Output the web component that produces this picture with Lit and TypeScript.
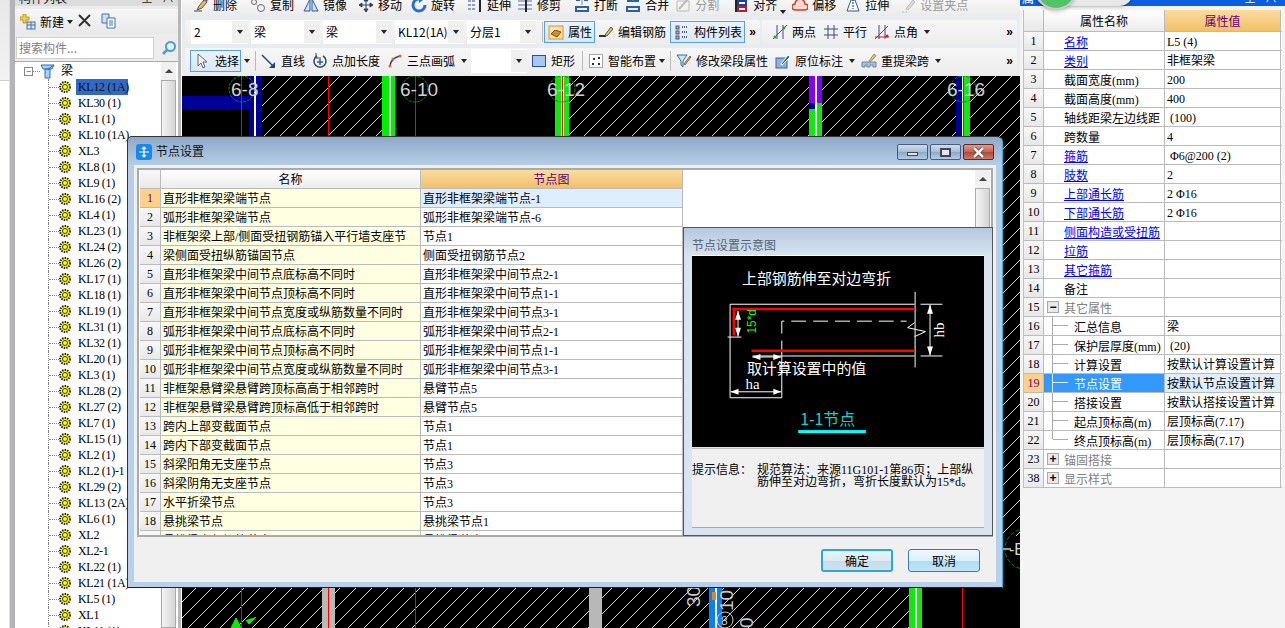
import { LitElement, html, css, svg, nothing } from "lit";
import { customElement } from "lit/decorators.js";

const icons: Record<string, unknown> = {
  erase: svg`<path d="M1 14h8" stroke="#444"/><path d="M4 13l2-4 5-6 3 2-5 6z" fill="#e8c050" stroke="#555"/><path d="M11 3l2-2 2 2-1 2z" fill="#a050c0"/>`,
  copy: svg`<circle cx="4" cy="5" r="2.5" fill="none" stroke="#667"/><circle cx="11" cy="11" r="3.5" fill="none" stroke="#667"/><path d="M6 7l2 2" stroke="#99a" stroke-dasharray="1 1"/>`,
  mirror: svg`<path d="M7 2v12H1zM9 2v12h6z" fill="#cfe0f5" stroke="#2a5a9a"/>`,
  move: svg`<path d="M8 1v14M1 8h14M8 1l-2 3h4zM8 15l-2-3h4zM1 8l3-2v4zM15 8l-3-2v4z" fill="#345" stroke="#345"/>`,
  rotate: svg`<path d="M8 2a6 6 0 1 0 6 6" fill="none" stroke="#2a70c8" stroke-width="3"/><path d="M8 0l4 3-4 3z" fill="#2a70c8"/>`,
  extend: svg`<path d="M1 4h8M1 8h8M1 12h8" stroke="#2a4a9a" stroke-dasharray="3 1"/><path d="M13 1v14" stroke="#223" stroke-width="2"/>`,
  trim: svg`<path d="M1 4h14M1 8h14M1 12h14" stroke="#5070a8"/><path d="M9 1v14" stroke="#223" stroke-width="2"/>`,
  break: svg`<path d="M2 10h12v4H2zM2 3h4M10 3h4" fill="none" stroke="#2a60a8" stroke-width="2"/><path d="M8 1v7" stroke="#888"/>`,
  merge: svg`<path d="M2 10h12v4H2zM2 4h12" fill="none" stroke="#2a60a8" stroke-width="2"/><path d="M8 1v3" stroke="#888"/>`,
  split: svg`<path d="M2 4h12v10H2z" fill="none" stroke="#bbb"/><path d="M4 12L13 2" stroke="#bbb" stroke-width="2"/>`,
  align: svg`<path d="M3 1v14" stroke="#223" stroke-width="2"/><path d="M5 4h8v4H5z" fill="#fff" stroke="#2040a0" stroke-width="2"/><path d="M5 10h8v4H5z" fill="#fff" stroke="#b02030" stroke-width="2"/>`,
  offset: svg`<path d="M3 13a3 3 0 0 1 0-6 5 5 0 0 1 10 0 3 3 0 0 1 0 6z" fill="#fbd8d0" stroke="#c84030" stroke-width="1.5"/>`,
  stretch: svg`<path d="M2 14h12L10 3H6z" fill="#fff" stroke="#2a5a9a"/><path d="M8 2v10" stroke="#223" stroke-dasharray="2 1"/>`,
  grip: svg`<path d="M2 15h6" stroke="#bbb" stroke-dasharray="2 1"/><path d="M6 12l7-9 2 2-7 8z" fill="#ddd" stroke="#bbb"/>`,
  prop: svg`<rect x="1" y="2" width="14" height="13" fill="#ffe0a0" stroke="#e09030"/><path d="M3 10l4-4 6 2-4 5z" fill="#c89030" stroke="#805010"/><path d="M3 5h6" stroke="#fff"/>`,
  rebar: svg`<path d="M1 12h7" stroke="#333" stroke-width="2"/><path d="M7 11l6-8 2 2-6 7z" fill="#e8c050" stroke="#555"/>`,
  list: svg`<rect x="2" y="2" width="3" height="3" fill="#aac" stroke="#557"/><rect x="2" y="7" width="3" height="3" fill="#aac" stroke="#557"/><rect x="2" y="12" width="3" height="3" fill="#aac" stroke="#557"/><path d="M8 3h6M8 8h6M8 13h6" stroke="#557" stroke-dasharray="1 1" stroke-width="2"/>`,
  twopt: svg`<path d="M5 1v14M11 1v14" stroke="#404890"/><path d="M1 15L15 1" stroke="#d02020"/><circle cx="3" cy="13" r="1.5" fill="#30a030"/><circle cx="12" cy="4" r="1.5" fill="#30a030"/>`,
  parallel: svg`<path d="M5 1v14M11 1v14M1 5h14M1 11h14" stroke="#404890"/>`,
  angle: svg`<path d="M5 1v14M11 1v14" stroke="#404890"/><path d="M1 15L14 2M1 13h14" stroke="#d02020"/><circle cx="13" cy="12" r="1.5" fill="#d02020"/>`,
  cursor: svg`<path d="M4 1v12l3-3 2 5 2-1-2-5h4z" fill="#f4f4f4" stroke="#667"/>`,
  line: svg`<path d="M1 2l12 12" stroke="#1c4a80" stroke-width="1.5"/><path d="M14 15H8l6-6z" fill="#1c4a80"/>`,
  ptlen: svg`<path d="M5 3a6 6 0 1 0 6 0" fill="none" stroke="#345" stroke-width="1.5"/><path d="M8 6v6M5 9h6" stroke="#2060b0" stroke-width="1.5"/><path d="M4 0v5h5" fill="none" stroke="#345"/>`,
  arc: svg`<path d="M3 13Q4 5 13 3" fill="none" stroke="#304060" stroke-width="1.5"/><circle cx="3" cy="13" r="1.5" fill="#e06040"/><circle cx="6" cy="6" r="1.5" fill="#e06040"/><circle cx="13" cy="3" r="1.5" fill="#e06040"/>`,
  rect: svg`<rect x="1.500" y="2.500" width="13" height="11" fill="#a8c8f0" stroke="#2a50a0"/>`,
  smart: svg`<rect x="1.500" y="1.500" width="13" height="13" fill="#fff" stroke="#555" stroke-dasharray="1 1"/><path d="M5 5h2v2H5zM10 4h2v2h-2zM4 10h2v2H4zM10 10h2v2h-2z" fill="#234"/>`,
  modify: svg`<path d="M1 2h10L7 8v6l-2-2V8z" fill="#cfe4f8" stroke="#2a70a8"/><path d="M8 11l6-8 1 1-6 8z" fill="#e8c050" stroke="#864"/>`,
  note: svg`<rect x="1" y="5" width="11" height="10" fill="#90b0e0" stroke="#36a"/><path d="M6 11l7-9 2 2-8 8z" fill="#2a60a8" stroke="#fff"/>`,
  respan: svg`<path d="M1 14V9h14v5h-3v-2H9v2H6v-2H4v2z" fill="#a8c0e0" stroke="#68a"/><path d="M8 8l5-7 2 2-6 6z" fill="#e8c070" stroke="#a86"/>`,
  newitem: svg`<path d="M3 0h3v3h3v3H6v3H3V6H0V3h3z" fill="#f0d040" stroke="#b09020" stroke-width=".8"/><rect x="7" y="8" width="8" height="7" fill="#dbe8f5" stroke="#4070a8"/><path d="M7 11h8M11 8v7" stroke="#4070a8"/>`,
  del: svg`<path d="M2 2l11 11M13 2L2 13" stroke="#333" stroke-width="2"/>`,
  clone: svg`<path d="M1 1h7v9H1z" fill="#cfe0f5" stroke="#4070b0"/><path d="M6 5h8v10H6z" fill="#fff" stroke="#4070b0"/><path d="M8 8h4M8 10h4M8 12h4" stroke="#4070b0"/>`,
  search: svg`<circle cx="9.500" cy="6.500" r="4.500" fill="#e8f4ff" stroke="#4a9ae0" stroke-width="2"/><path d="M6 10l-4 4" stroke="#4a9ae0" stroke-width="2.500"/>`,
};

const icon = (name: string) => html`<svg class="ico" viewBox="0 0 16 16">${icons[name]}</svg>`;

const gear = html`<svg class="gear" viewBox="0 0 12 12"><circle cx="6" cy="6" r="5" fill="#ff0" stroke="#223" stroke-width="2" stroke-dasharray="1.500 1"/><circle cx="6" cy="6" r="2.500" fill="#ff0" stroke="#333"/></svg>`;

type Tool = { i: string; t: string; ml: number; off?: boolean; caret?: number };

const row1: Tool[] = [
  { i: "erase", t: "删除", ml: 0 },
  { i: "copy", t: "复制", ml: 13 },
  { i: "mirror", t: "镜像", ml: 9 },
  { i: "move", t: "移动", ml: 11 },
  { i: "rotate", t: "旋转", ml: 9 },
  { i: "extend", t: "延伸", ml: 12 },
  { i: "trim", t: "修剪", ml: 6 },
  { i: "break", t: "打断", ml: 13 },
  { i: "merge", t: "合并", ml: 7 },
  { i: "split", t: "分割", ml: 6, off: true },
  { i: "align", t: "对齐", ml: 14, caret: 3 },
  { i: "offset", t: "偏移", ml: 6 },
  { i: "stretch", t: "拉伸", ml: 9 },
  { i: "grip", t: "设置夹点", ml: 11, off: true },
];

const treeItems = ["KL12 (1A)", "KL30 (1)", "KL1 (1)", "KL10 (1A)", "XL3", "KL8 (1)", "KL9 (1)", "KL16 (2)", "KL4 (1)", "KL23 (1)", "KL24 (2)", "KL26 (2)", "KL17 (1)", "KL18 (1)", "KL19 (1)", "KL31 (1)", "KL32 (1)", "KL20 (1)", "KL3 (1)", "KL28 (2)", "KL27 (2)", "KL7 (1)", "KL15 (1)", "KL2 (1)", "KL2 (1)-1", "KL29 (2)", "KL13 (2A)", "KL6 (1)", "XL2", "XL2-1", "KL22 (1)", "KL21 (1A)", "KL5 (1)", "XL1", "KL11 (1)"];

const nodeRows = [
  ["直形非框架梁端节点", "直形非框架梁端节点-1"],
  ["弧形非框架梁端节点", "弧形非框架梁端节点-6"],
  ["非框架梁上部/侧面受扭钢筋锚入平行墙支座节", "节点1"],
  ["梁侧面受扭纵筋锚固节点", "侧面受扭钢筋节点2"],
  ["直形非框架梁中间节点底标高不同时", "直形非框架梁中间节点2-1"],
  ["直形非框架梁中间节点顶标高不同时", "直形非框架梁中间节点1-1"],
  ["直形非框架梁中间节点宽度或纵筋数量不同时", "直形非框架梁中间节点3-1"],
  ["弧形非框架梁中间节点底标高不同时", "弧形非框架梁中间节点2-1"],
  ["弧形非框架梁中间节点顶标高不同时", "弧形非框架梁中间节点1-1"],
  ["弧形非框架梁中间节点宽度或纵筋数量不同时", "弧形非框架梁中间节点3-1"],
  ["非框架悬臂梁悬臂跨顶标高高于相邻跨时", "悬臂节点5"],
  ["非框架悬臂梁悬臂跨顶标高低于相邻跨时", "悬臂节点5"],
  ["跨内上部变截面节点", "节点1"],
  ["跨内下部变截面节点", "节点1"],
  ["斜梁阳角无支座节点", "节点3"],
  ["斜梁阴角无支座节点", "节点3"],
  ["水平折梁节点", "节点3"],
  ["悬挑梁节点", "悬挑梁节点1"],
  ["悬挑梁上部钢筋节点", "悬挑梁节点2"],
];

// kind: l = blue link, n = plain, g = grey group, c = child of the group
type Prop = { no: number; name: string; val?: string; kind: string; box?: string; last?: boolean };
const props: Prop[] = [
  { no: 1, name: "名称", val: "L5 (4)", kind: "l" },
  { no: 2, name: "类别", val: "非框架梁", kind: "l" },
  { no: 3, name: "截面宽度(mm)", val: "200", kind: "n" },
  { no: 4, name: "截面高度(mm)", val: "400", kind: "n" },
  { no: 5, name: "轴线距梁左边线距", val: " (100)", kind: "n" },
  { no: 6, name: "跨数量", val: "4", kind: "n" },
  { no: 7, name: "箍筋", val: " Φ6@200 (2)", kind: "l" },
  { no: 8, name: "肢数", val: "2", kind: "l" },
  { no: 9, name: "上部通长筋", val: "2 Φ16", kind: "l" },
  { no: 10, name: "下部通长筋", val: "2 Φ16", kind: "l" },
  { no: 11, name: "侧面构造或受扭筋", kind: "l" },
  { no: 12, name: "拉筋", kind: "l" },
  { no: 13, name: "其它箍筋", kind: "l" },
  { no: 14, name: "备注", kind: "n" },
  { no: 15, name: "其它属性", kind: "g", box: "−" },
  { no: 16, name: "汇总信息", val: "梁", kind: "c" },
  { no: 17, name: "保护层厚度(mm)", val: " (20)", kind: "c" },
  { no: 18, name: "计算设置", val: "按默认计算设置计算", kind: "c" },
  { no: 19, name: "节点设置", val: "按默认节点设置计算", kind: "c" },
  { no: 20, name: "搭接设置", val: "按默认搭接设置计算", kind: "c" },
  { no: 21, name: "起点顶标高(m)", val: "层顶标高(7.17)", kind: "c" },
  { no: 22, name: "终点顶标高(m)", val: "层顶标高(7.17)", kind: "c", last: true },
  { no: 23, name: "锚固搭接", kind: "g", box: "+" },
  { no: 38, name: "显示样式", kind: "g", box: "+" },
];

const axes = [
  { x: 242, label: "6-8", tx: 231 },
  { x: 415, label: "6-10", tx: 400 },
  { x: 562, label: "6-12", tx: 547 },
  { x: 963, label: "6-16", tx: 947 },
];

@customElement("app-root")
export class AppRoot extends LitElement {
  static styles = css`
    :host {
      display: block;
      position: relative;
      width: 1285px;
      height: 628px;
      overflow: hidden;
      background: #fff;
      font: 12px/14px "Liberation Serif", "Noto Sans CJK SC", serif;
      color: #000;
    }
    .app { display: flex; height: 628px; }
    .ico { width: 16px; height: 16px; flex: none; }
    .gear { width: 12px; height: 12px; flex: none; }

    .rail { width: 9px; flex: none; background: #fff; border-right: 1px solid #ddd; }
    .rail-top { height: 80px; background: linear-gradient(#e8e8e8, #f2f2f2); border-bottom: 1px solid #ccc; }
    .rail-bar { width: 5px; flex: none; background: #b4b4b8; }

    .tree-panel { width: 163px; flex: none; display: flex; flex-direction: column; background: #ececec; }
    .panel-head { height: 6px; flex: none; display: flex; justify-content: space-between; overflow: hidden; padding: 0 4px; background: #dcdcdc; }
    .panel-head span { margin-top: -8px; line-height: 14px; color: #222; }
    .tree-tools { height: 25px; margin: 3px 0; flex: none; display: flex; align-items: center; padding-left: 5px; background: linear-gradient(#f6f6f6, #e9e9e9); font-family: "Noto Sans CJK SC", sans-serif; }
    .tree-tools .del { margin-left: 4px; }
    .tree-tools .clone { margin-left: 8px; }
    .tree-tools b { font-weight: 400; margin-left: 4px; }
    .search { height: 22px; flex: none; display: flex; align-items: center; gap: 7px; padding-left: 1px; }
    .search div { width: 134px; height: 20px; background: #fff; border: 1px solid #d0d0d0; padding-left: 2px; line-height: 20px; color: #808080; font-family: "Noto Sans CJK SC", sans-serif; }
    .tree { flex: 1; margin-top: 2px; display: flex; background: #fff; border-top: 1px solid #aaa; overflow: hidden; }
    .tree-list { width: 146px; flex: none; padding-top: 1px; overflow: hidden; }
    .tree-root { height: 16px; display: flex; align-items: center; padding-left: 9px; }
    .tbox { width: 9px; height: 9px; flex: none; border: 1px solid #888; box-sizing: border-box; background: #fff; line-height: 6px; text-align: center; font-size: 9px; }
    .tdots { width: 7px; border-top: 1px dotted #888; flex: none; }
    .tree-root .ico { margin-right: 5px; }
    .tree-row { height: 16px; margin-left: 33px; display: flex; align-items: center; border-left: 1px dotted #888; white-space: nowrap; }
    .tree-row .tdots { width: 10px; }
    .lbl { margin-left: 5px; padding: 1px 2px; letter-spacing: -0.3px; }
    .lbl.sel { background: #3169c6; color: #111; width: 48px; }

    .scroll { width: 15px; flex: none; display: flex; flex-direction: column; background: #f0f0f0; }
    .scroll-up { height: 18px; flex: none; display: flex; align-items: center; justify-content: center; }
    .scroll-up::before { content: ""; border: 4px solid transparent; border-top: 0; border-bottom: 4px solid #444; }
    .scroll-thumb { flex: 1; border: 1px solid #aaa; background: linear-gradient(90deg, #f4f4f4, #d4d4d4); }
    .split { width: 4px; flex: none; background: #fff; border-left: 3px solid #b8b8b8; box-sizing: border-box; }

    .center { width: 838px; flex: none; display: flex; flex-direction: column; background: #e9ecef; font-family: "Noto Sans CJK SC", sans-serif; }
    .bar { display: flex; align-items: center; background: linear-gradient(#f6f6f6, #ededed); white-space: nowrap; }
    .bar1 { height: 14px; margin-bottom: 6px; padding-left: 11px; overflow: hidden; align-items: flex-end; }
    .bar1 .tool { margin-bottom: 1px; }
    .bars2 { height: 24px; margin-bottom: 4px; display: flex; gap: 2px; margin-left: 3px; margin-right: 3px; }
    .group { display: flex; align-items: center; height: 24px; background: linear-gradient(#f6f6f6, #ededed); border-radius: 2px; }
    .group.a { width: 575px; padding-left: 6px; box-sizing: border-box; }
    .group.b { flex: 1; padding-left: 10px; }
    .bar3 { height: 26px; margin: 0 3px 2px; padding-left: 5px; }
    .tool { display: flex; align-items: center; gap: 4px; flex: none; }
    .tool.off { color: #9a9a9a; }
    .caret { width: 0; height: 0; flex: none; border: 3.500px solid transparent; border-top: 4px solid #222; border-bottom: 0; }
    .more { margin-left: auto; margin-right: 4px; font: 700 12px/14px "Liberation Sans", sans-serif; }
    .sep { width: 1px; height: 20px; flex: none; background: #bbb; }
    .combo { height: 24px; flex: none; box-sizing: border-box; display: flex; align-items: center; justify-content: space-between; background: #fff; padding-left: 3px; }
    .combo i { width: 16px; height: 22px; display: flex; align-items: center; justify-content: center; background: #f0f0f0; }
    .toggle { height: 22px; box-sizing: border-box; flex: none; display: flex; align-items: center; gap: 3px; padding-left: 3px; background: linear-gradient(#eaf3fc, #d8e8f8); border: 1px solid #5aa0e0; }

    .canvas { flex: 1; position: relative; background: #000; overflow: hidden; }
    .canvas svg { position: absolute; left: 0; top: 0; }

    .props { flex: 1; display: flex; flex-direction: column; background: #f4f4f4; }
    .props-head { height: 6px; flex: none; background: #0a5ee2; color: #fff; display: flex; justify-content: space-between; padding: 0 8px 0 2px; overflow: hidden; }
    .props-head span { margin-top: -8px; }
    .pill { position: absolute; left: 1035px; top: -8px; width: 98px; height: 14px; background: #e8e8e8; border-radius: 0 0 14px 14px; box-shadow: 0 1px 3px rgba(0, 0, 0, .25); }
    .ball { position: absolute; left: 1037px; top: -30px; width: 38px; height: 38px; border-radius: 50%; background: #52c468; box-shadow: 0 0 0 2px #ccc, 0 3px 4px rgba(0, 0, 0, .3); }
    .grid { margin: 4px 0 0 3px; width: 258px; border-left: 1px solid #c0c0c0; }
    .prow { display: grid; grid-template-columns: 20px 121px 116px; height: 19px; box-sizing: border-box; border-bottom: 1px solid #bbb; background: #fff; }
    .prow > div { border-right: 1px solid #bbb; line-height: 18px; white-space: pre; overflow: hidden; display: flex; align-items: center; box-sizing: border-box; }
    .idx { justify-content: center; background: linear-gradient(#f8f8f8, #e8e8e8); }
    .head { height: 22px; }
    .head > div { justify-content: center; }
    .h-name { background: linear-gradient(#fff, #ececec); padding-top: 2px; box-sizing: border-box; }
    .h-val { background: linear-gradient(#fbdca0, #f2c068); color: #60007a; padding-top: 2px; box-sizing: border-box; }
    .prow > .cell-val { padding: 1px 0 0 2px; }
    .prow > .cell-name { padding: 3px 0 0 20px; position: relative; }
    .link { color: #00f; text-decoration: underline; }
    .grey { color: #808080; }
    .pbox { position: absolute; left: 3px; top: 3px; width: 12px; height: 12px; box-sizing: border-box; border: 1px solid #aaa; background: #e8e8e8; text-align: center; color: #000; font: 700 12px/10px "Liberation Sans", sans-serif; }
    .branch { position: absolute; left: 8px; top: 0; bottom: 0; width: 15px; border-left: 1px solid #aaa; }
    .branch::after { content: ""; position: absolute; left: 0; top: 8px; width: 15px; border-top: 1px solid #aaa; }
    .branch.last { bottom: 10px; }
    .prow > .cell-name.child { padding-left: 30px; }
    .prow.on .idx { background: #ffd08a; color: #60007a; }
    .prow.on .cell-name { background: #3399ff; color: #fff; }
    .prow.on .branch, .prow.on .branch::after { border-color: #e0eeff; }
    .prow.on .cell-val { background: #dfeeff; }

    .dialog { position: absolute; left: 127px; top: 136px; width: 876px; height: 452px; box-sizing: border-box; border: 1px solid #333; border-right-color: #20b8e0; border-bottom-color: #222; border-radius: 5px 6px 0 0; padding: 0 6px 5px 6px; background: linear-gradient(#8fa9c8 0, #b5cde6 28px, #b8d0ea 100%); display: flex; flex-direction: column; font-family: "Liberation Serif", "Noto Sans CJK SC", serif; }
    .d-title { height: 28px; flex: none; display: flex; align-items: center; gap: 4px; padding-left: 2px; font-family: "Noto Sans CJK SC", sans-serif; color: #111; }
    .d-logo { width: 16px; height: 16px; margin-top: 2px; }
    .d-btns { margin-left: auto; display: flex; gap: 2px; margin-right: 2px; margin-top: 2px; }
    .d-btn { width: 31px; height: 16px; box-sizing: border-box; border: 1px solid #4a5a78; border-radius: 2px; background: linear-gradient(#cfdcec 0, #a4bdd8 50%, #8ca8c8 51%, #b4cce4); display: flex; align-items: center; justify-content: center; }
    .d-btn.x { background: linear-gradient(#e09a8c 0, #c8604e 50%, #b04838 51%, #cc7868); border-color: #602828; }
    .d-btn.x svg { width: 13px; height: 11px; }
    .d-min { width: 11px; height: 4px; background: #dfe6ee; border: 1px solid #445; box-sizing: border-box; margin-top: 4px; }
    .d-max { width: 11px; height: 9px; background: #dfe6ee; border: 2px solid #445; box-sizing: border-box; }
    .d-body { flex: 1; background: #f0f0f0; padding: 3px 3px 0 3px; display: flex; flex-direction: column; position: relative; }
    .d-frame { height: 369px; flex: none; box-sizing: border-box; border: 2px solid #aaa; background: #fff; position: relative; overflow: hidden; padding-left: 1px; }
    .nrow { display: grid; grid-template-columns: 21px 260px 262px; height: 19px; width: 543px; box-sizing: border-box; border-bottom: 1px solid #bbb; }
    .nrow > div { display: flex; align-items: center; border-right: 1px solid #bbb; white-space: nowrap; overflow: hidden; padding: 2px 0 0 2px; box-sizing: border-box; }
    .nrow > .idx { padding: 0; justify-content: center; }
    .nrow > .n-name { background: #ffffe1; }
    .nrow > .n-val { background: #fff; }
    .nrow.on > .idx { background: #ffd08a; color: #60007a; }
    .nrow.on > .n-val { background: #dfeeff; }
    .nrow.nhead > div { justify-content: center; padding: 2px 0 0; }
    .d-scroll { position: absolute; top: 0; right: 1px; bottom: 0; }
    .hint { position: absolute; left: 549px; top: 62px; width: 310px; height: 309px; box-sizing: border-box; border: 1px solid #555; background: linear-gradient(#b4c8de 0, #d8e4f0 28px, #d8e4f0 100%); padding: 0 8px; display: flex; flex-direction: column; }
    .hint-title { height: 27px; flex: none; display: flex; align-items: center; color: #556070; padding-top: 6px; box-sizing: border-box; font-family: "Noto Sans CJK SC", sans-serif; }
    .pic { width: 292px; height: 192px; flex: none; background: #000; display: block; border-top: 1px solid #fff; box-sizing: border-box; }
    .info { height: 80px; flex: none; margin-top: 1px; box-sizing: border-box; background: #f0f0f0; border-top: 1px solid #bbb; border-bottom: 1px solid #aaa; display: flex; padding-top: 15px; line-height: 12px; }
    .info-label { width: 65px; flex: none; }
    .d-foot { flex: 1; display: flex; justify-content: flex-end; align-items: center; gap: 15px; padding-right: 13px; padding-top: 2px; }
    .btn { width: 72px; height: 23px; box-sizing: border-box; display: flex; align-items: center; justify-content: center; border: 1px solid #3a7ab0; border-radius: 3px; background: linear-gradient(#eef7fd 0, #dcf0fb 50%, #b0dcf6 51%, #c0e4f8); font-family: "Noto Sans CJK SC", sans-serif; }
    .btn.def { border: 2px solid #2aa8d8; background: linear-gradient(#eaf4fa 0, #dceaf4 50%, #c4dcea 51%, #cfe2ec); }
  `;

  tool(t: Tool) {
    return html`<div class="tool ${t.off ? "off" : ""}" style="margin-left:${t.ml}px">${icon(t.i)}<span>${t.t}</span></div>${t.caret ? html`<span class="caret" style="margin-left:${t.caret}px"></span>` : nothing}`;
  }

  combo(text: string, w: number, ml = 3) {
    return html`<div class="combo" style="width:${w}px;margin-left:${ml}px"><span>${text}</span><i><span class="caret"></span></i></div>`;
  }

  renderTree() {
    return html`
      <div class="rail"><div class="rail-top"></div></div>
      <div class="rail-bar"></div>
      <div class="tree-panel">
        <div class="panel-head"><span>构件列表</span><span>⊥ &nbsp; ∧</span></div>
        <div class="tree-tools">
          ${icon("newitem")}<b>新建</b><span class="caret" style="margin-left:3px"></span>
          <span class="del">${icon("del")}</span><span class="clone">${icon("clone")}</span>
        </div>
        <div class="search"><div>搜索构件...</div>${icon("search")}</div>
        <div class="tree">
          <div class="tree-list">
            <div class="tree-root"><span class="tbox">−</span><span class="tdots"></span>
              <svg class="ico" viewBox="0 0 16 16"><path d="M1 2h13l-2 4H3zM5 6h5v9H5z" fill="#a8d0f0" stroke="#2a70b8"/><path d="M8 6l6-4" stroke="#2a70b8"/></svg>
              <span>梁</span></div>
            ${treeItems.map((t, i) => html`<div class="tree-row"><span class="tdots"></span>${gear}<span class="lbl ${i === 0 ? "sel" : ""}">${t}</span></div>`)}
          </div>
          <div class="scroll"><div class="scroll-up"></div><div class="scroll-thumb"></div></div>
        </div>
      </div>
      <div class="split"></div>
    `;
  }

  renderBars() {
    return html`
      <div class="bar bar1">${row1.map((t) => this.tool(t))}</div>
      <div class="bars2">
        <div class="group a">
          ${this.combo("2", 57, 0)}${this.combo("梁", 69)}${this.combo("梁", 69)}${this.combo("KL12(1A)", 69)}${this.combo("分层1", 69)}
          <span class="sep" style="margin-left:6px"></span>
          <div class="toggle" style="width:51px;margin-left:1px">${icon("prop")}<span style="margin-left:1px">属性</span></div>
          ${this.tool({ i: "rebar", t: "编辑钢筋", ml: 3 })}
          <div class="toggle" style="width:75px;margin-left:4px">${icon("list")}<span style="margin-left:1px">构件列表</span></div>
          <span class="more">»</span>
        </div>
        <div class="group b">
          ${this.tool({ i: "twopt", t: "两点", ml: 0 })}${this.tool({ i: "parallel", t: "平行", ml: 7 })}${this.tool({ i: "angle", t: "点角", ml: 7, caret: 6 })}
          <span class="more">»</span>
        </div>
      </div>
      <div class="bar bar3">
        <div class="toggle" style="width:51px;gap:1px">${icon("cursor")}<span style="margin-left:4px">选择</span></div>
        <span class="caret" style="margin-left:3px"></span>
        <span class="sep" style="margin-left:5px"></span>
        ${this.tool({ i: "line", t: "直线", ml: 5 })}${this.tool({ i: "ptlen", t: "点加长度", ml: 7 })}${this.tool({ i: "arc", t: "三点画弧", ml: 7, caret: 6 })}
        ${this.combo("", 56, 4)}
        ${this.tool({ i: "rect", t: "矩形", ml: 4 })}
        <span class="sep" style="margin-left:7px"></span>
        ${this.tool({ i: "smart", t: "智能布置", ml: 5, caret: 3 })}
        <span class="sep" style="margin-left:5px"></span>
        ${this.tool({ i: "modify", t: "修改梁段属性", ml: 5 })}${this.tool({ i: "note", t: "原位标注", ml: 7, caret: 6 })}${this.tool({ i: "respan", t: "重提梁跨", ml: 6, caret: 6 })}
        <span class="more">»</span>
      </div>
    `;
  }

  // drawing area, in page coordinates through the viewBox
  renderCanvas() {
    return html`<div class="canvas">
      <svg width="838" height="552" viewBox="182 76 838 552">
        <defs>
          <pattern id="hatch" width="16" height="16" patternUnits="userSpaceOnUse">
            <path d="M-1 17L17 -1" stroke="#d8d8d8" stroke-width="1"/>
          </pattern>
        </defs>
        <rect x="262" y="76" width="120" height="130" fill="url(#hatch)"/>
        <rect x="569" y="76" width="451" height="460" fill="url(#hatch)"/>
        <rect x="182" y="530" width="727" height="98" fill="url(#hatch)"/>

        <rect x="182" y="96" width="68" height="13" fill="#000098"/>
        <rect x="249" y="76" width="13" height="60" fill="#000098"/>
        <rect x="254" y="76" width="2" height="60" fill="#fff"/>
        <rect x="382" y="76" width="13" height="60" fill="#00f000"/>
        <rect x="389" y="76" width="2" height="60" fill="#fff"/>
        <rect x="555" y="76" width="14" height="60" fill="#10e810"/>
        <rect x="561" y="76" width="3" height="60" fill="#fff"/>
        <rect x="809" y="76" width="13" height="27" fill="#8000ff"/>
        <rect x="809" y="103" width="6" height="6" fill="#000098"/>
        <rect x="815" y="103" width="7" height="33" fill="#10e810"/>
        <rect x="809" y="109" width="6" height="27" fill="#10e810"/>
        <rect x="815" y="76" width="2" height="60" fill="#fff"/>
        <rect x="956" y="76" width="7" height="60" fill="#000098"/>
        <rect x="963" y="76" width="7" height="60" fill="#10e810"/>
        <rect x="962" y="76" width="2" height="60" fill="#fff"/>

        <path d="M241.500 76V136M328.500 76V136M415.500 76V136M562.500 76V136M963.500 76V136" stroke="#f00" stroke-width="1"/>

        ${axes.map((a) => svg`
          <circle cx=${a.x} cy="89" r="13" fill="none" stroke="#0a8a0a" stroke-dasharray="3 1"/>
          <text x=${a.tx} y="96" font-family="Liberation Sans" font-size="19" fill="#d0d0d0">${a.label}</text>`)}

        <rect x="322" y="585" width="13" height="43" fill="#b8b8b8"/>
        <rect x="589" y="585" width="13" height="43" fill="#b8b8b8"/>
        <rect x="709" y="585" width="13" height="43" fill="#0a80f0"/>
        <rect x="715" y="585" width="2" height="43" fill="#fff"/>
        <rect x="712" y="592" width="4" height="8" fill="#f08010"/>
        <rect x="909" y="585" width="13" height="43" fill="#10e810"/>
        <rect x="915" y="585" width="2" height="43" fill="#fff"/>
        <path d="M241.500 585V628M328.500 585V628M415.500 585V628M962.500 585V628" stroke="#f00"/>
        <path d="M231 628l5-10 5 10zM246 620l3 4 7-7" fill="#10e810" stroke="#10e810"/>
        <text transform="translate(700 607) rotate(-90)" font-family="Liberation Sans" font-size="19" fill="#c8c8c8">30</text>
        <text transform="translate(733 611) rotate(-90)" font-family="Liberation Sans" font-size="19" fill="#c8c8c8">10</text>
        <circle cx="725" cy="620" r="8" fill="none" stroke="#c8c8c8"/>
        <text x="721" y="625" font-family="Liberation Sans" font-size="12" fill="#c8c8c8">8</text>
        <text transform="translate(753 628) rotate(-90)" font-family="Liberation Sans" font-size="19" fill="#c8c8c8">0</text>
        <circle cx="1025" cy="549" r="20" fill="none" stroke="#0a8a0a" stroke-dasharray="4 2"/>
        <path d="M1003 549h8" stroke="#999" stroke-width="2"/>
        <text x="1009" y="555" font-family="Liberation Sans" font-size="16" fill="#d8d8d8">-E</text>
      </svg>
    </div>`;
  }

  renderProps() {
    return html`<div class="props">
      <div class="props-head"><span>属</span><span>⊥ &nbsp; ∧</span></div>
      <div class="grid">
        <div class="prow head"><div class="idx"></div><div class="h-name">属性名称</div><div class="h-val">属性值</div></div>
        ${props.map((p) => html`
          <div class="prow ${p.no === 19 ? "on" : ""}">
            <div class="idx">${p.no}</div>
            <div class="cell-name ${p.kind === "c" ? "child" : ""} ${p.kind === "l" ? "link" : ""} ${p.kind === "g" ? "grey" : ""}">
              ${p.kind === "c" ? html`<span class="branch ${p.last ? "last" : ""}"></span>` : nothing}
              ${p.box ? html`<span class="pbox">${p.box}</span>` : nothing}
              <span>${p.name}</span>
            </div>
            <div class="cell-val">${p.val ?? ""}</div>
          </div>`)}
      </div>
    </div>`;
  }

  renderPic() {
    return html`<svg class="pic" viewBox="0 0 292 192">
      <g fill="none" stroke="#fff" stroke-width="1">
        <path d="M37.500 48.500H223M37.500 48.500V142.500H89.500V100M60 100.500H223M223.500 36V112"/>
        <path d="M89.500 100V65.500H215" stroke-dasharray="15 7"/>
        <path d="M223 67L216 72L234 76L223 81"/>
        <path d="M45.500 55V81M35 81.500H49M60 101.500H89M38 136.500H89M238.500 49V100M229 48.500H251M229 100.500H251"/>
      </g>
      <g fill="#f00"><rect x="40" y="52" width="183" height="2.500"/><rect x="40" y="52" width="2.500" height="28"/><rect x="59" y="94" width="164" height="2.500"/></g>
      <g fill="#fff">
        <path d="M45.500 55l-3 9h6zM45.500 81l-3-9h6zM60 101.500l8-3v6zM89 101.500l-8-3v6zM38 136.500l8-3v6zM89 136.500l-8-3v6zM238.500 49l-3 9h6zM238.500 100l-3-9h6z"/>
      </g>
      <g font-family="Noto Sans CJK SC" font-size="15" fill="#fff">
        <text x="49.500" y="28">上部钢筋伸至对边弯折</text>
        <text x="54.500" y="119">取计算设置中的值</text>
      </g>
      <text x="53" y="134" font-family="Liberation Serif" font-size="15" fill="#fff">ha</text>
      <text transform="translate(253 82) rotate(-90)" font-family="Liberation Serif" font-size="15" fill="#fff">hb</text>
      <text transform="translate(64 78) rotate(-90)" font-family="Liberation Sans" font-size="12" fill="#20f020">15*d</text>
      <text x="108" y="170" font-family="Noto Sans CJK SC" font-size="16" fill="#10d0d0">1-1节点</text>
      <rect x="106" y="175" width="68" height="3" fill="#0ff"/>
    </svg>`;
  }

  renderDialog() {
    return html`<div class="dialog">
      <div class="d-title">
        <svg class="d-logo" viewBox="0 0 16 16"><rect width="16" height="16" rx="3" fill="#1888f0"/><path d="M8 3v10M3 8h10M6 5l2-2 2 2M6 11l2 2 2-2" fill="none" stroke="#fff" stroke-width="1.200"/></svg>
        <span>节点设置</span>
        <div class="d-btns">
          <div class="d-btn"><span class="d-min"></span></div>
          <div class="d-btn"><span class="d-max"></span></div>
          <div class="d-btn x"><svg viewBox="0 0 13 11"><path d="M2 1l9 9M11 1l-9 9" stroke="#444" stroke-width="4"/><path d="M2 1l9 9M11 1l-9 9" stroke="#f4f4f4" stroke-width="2.500"/></svg></div>
        </div>
      </div>
      <div class="d-body">
        <div class="d-frame">
          <div class="nrow nhead"><div class="idx"></div><div class="h-name">名称</div><div class="h-val">节点图</div></div>
          ${nodeRows.map((r, i) => html`<div class="nrow ${i === 0 ? "on" : ""}"><div class="idx">${i + 1}</div><div class="n-name">${r[0]}</div><div class="n-val">${r[1]}</div></div>`)}
          <div class="scroll d-scroll"><div class="scroll-up"></div><div class="scroll-thumb"></div></div>
        </div>
        <div class="hint">
          <div class="hint-title">节点设置示意图</div>
          ${this.renderPic()}
          <div class="info">
            <div class="info-label">提示信息：</div>
            <div>规范算法：来源11G101-1第86页；上部纵<br />筋伸至对边弯折，弯折长度默认为15*d。</div>
          </div>
        </div>
        <div class="d-foot"><div class="btn def">确定</div><div class="btn">取消</div></div>
      </div>
    </div>`;
  }

  render() {
    return html`
      <div class="app">
        ${this.renderTree()}
        <div class="center">${this.renderBars()}${this.renderCanvas()}</div>
        ${this.renderProps()}
      </div>
      ${this.renderDialog()}
      <div class="pill"></div>
      <div class="ball"></div>
    `;
  }
}
